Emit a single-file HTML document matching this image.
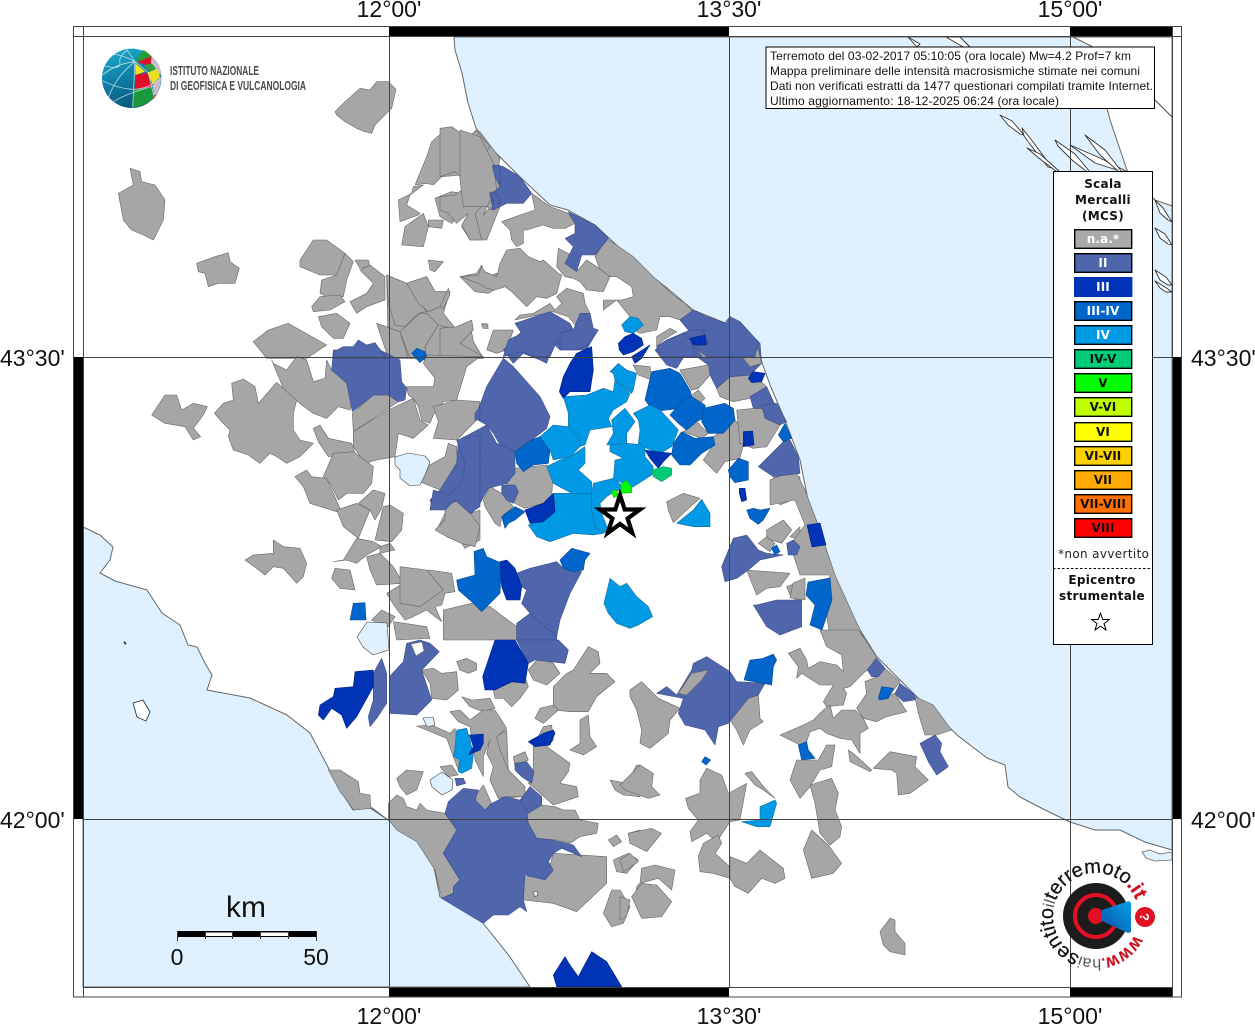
<!DOCTYPE html>
<html><head><meta charset="utf-8"><title>Mappa intensità</title>
<style>
html,body{margin:0;padding:0;background:#fff}
svg{display:block}
polygon{vector-effect:non-scaling-stroke;stroke:#666;stroke-width:.6;stroke-linejoin:round}
.g polygon{fill:#a6a6a6}
.b polygon{fill:#4f66ad;stroke:#3c4f88}
.c polygon{fill:#0033b5;stroke:#00247f}
.d polygon{fill:#0066cc;stroke:#0a4a90}
.e polygon{fill:#0099e6;stroke:#1a6f9e}
.f polygon{fill:#00cc77;stroke:#109a5f}
.v polygon{fill:#00ff00;stroke:#20b020}
.l polygon{fill:#dff0fe;stroke:#444}
.s polygon{fill:#fff;stroke:#333;stroke-width:.9}
.lab{font-family:"Liberation Sans",sans-serif;font-size:23px;fill:#111}
.dj{font-family:"DejaVu Sans",sans-serif;font-weight:bold;font-size:12px;text-anchor:middle;letter-spacing:.3px;fill:#111}
.lg{font-family:"DejaVu Sans",sans-serif;font-weight:bold;font-size:12px;text-anchor:middle;letter-spacing:.1px}
.tx{font-family:"Liberation Sans",sans-serif;font-size:12px;fill:#111}
</style></head><body>
<svg xmlns="http://www.w3.org/2000/svg" width="1255" height="1024" viewBox="0 0 1255 1024">
<defs>
<linearGradient id="gl" x1="0" y1="0" x2=".3" y2="1"><stop offset="0" stop-color="#1fb0cf"/><stop offset=".55" stop-color="#0f7ea6"/><stop offset="1" stop-color="#0a5c80"/></linearGradient>
<linearGradient id="cn" x1="0" y1="1" x2="1" y2="0"><stop offset="0" stop-color="#0d4fa8"/><stop offset="1" stop-color="#00a3e8"/></linearGradient>
</defs>
<rect width="1255" height="1024" fill="#fff"/>

<!-- sea -->
<polygon fill="#dff0fe" stroke="#444" style="stroke-width:1" points="454,37 455,50 462,73 468,103 476,128 490,147 520,177 550,205 568,210 595,225 640,267 667,288 693,310 725,323 730,317 740,323 758,342 760,357 770,385 785,420 800,460 808,500 820,530 835,580 860,630 877,657 915,695 940,718 957,735 987,758 1005,765 1008,787 1020,797 1045,810 1070,822 1095,830 1120,830 1145,842 1172,850 1172,37"/>
<polygon fill="#dff0fe" stroke="#444" style="stroke-width:1" points="83,527 100,535 113,547 110,560 100,573 115,581 147,590 162,613 180,625 188,645 197,647 206,665 212,675 207,690 223,693 250,698 287,715 310,733 328,767 340,790 353,810 370,808 388,820 417,840 433,863 440,897 467,910 483,923 510,957 530,987 83,987"/>
<!-- NE land -->
<polygon fill="#fff" stroke="#444" style="stroke-width:1" points="1073,37 1093,47 1105,100 1110,120 1127,170 1155,200 1172,206 1172,37"/>
<g class="s">
<polygon points="1022,128 1030,138 1045,158 1052,168 1048,167 1036,152 1024,136"/>
<polygon points="1027,148 1040,154 1060,172 1056,171 1040,159"/>
<polygon points="1055,140 1075,154 1090,172 1086,171 1072,160 1058,146"/>
<polygon points="1070,145 1100,158 1128,172 1120,171 1095,163"/>
<polygon points="1085,135 1105,150 1122,172 1118,171 1100,155"/>
<polygon points="1000,115 1012,121 1024,135 1020,134 1008,125"/>
<polygon points="908,37 920,44 917,47"/>
<polygon points="946,37 965,48 970,47 960,37"/>
<polygon points="1155,200 1163,208 1172,222 1168,220 1160,213"/>
<polygon points="1155,228 1165,234 1172,245 1168,244 1160,238"/>
<polygon points="1155,270 1166,277 1172,285 1168,285 1160,280"/>
<polygon points="1155,281 1165,287 1172,292 1166,292 1160,288"/>
<polygon points="133,703 143,700 150,712 146,721 137,717"/>
<polygon points="124,642 125,642 126,644 125,644"/>
</g>
<polyline points="1155,100 1172,117" fill="none" stroke="#444"/>
<polygon fill="#dff0fe" stroke="#444" style="stroke-width:.8" points="1142,852 1150,850 1160,854 1172,852 1172,860 1155,861 1146,858"/>

<!-- gray zoom8 -->
<g class="g" transform="translate(80,30) scale(.33333)">
<polygon points="920,735 980,760 1040,740 1065,785 1110,785 1090,850 1130,900 1170,880 1180,935 1210,985 925,985"/>
<polygon points="765,245 790,220 840,175 870,180 890,155 925,155 948,178 935,235 885,285 875,310 855,305 830,295 795,275 770,255"/>
<polygon points="150,415 180,425 185,455 225,465 255,510 250,570 235,600 220,630 190,615 155,600 130,570 115,490 160,465"/>
<polygon points="350,700 405,680 445,668 450,695 478,715 465,760 415,760 385,770 375,730 355,725"/>
<polygon points="660,690 700,630 740,630 795,670 770,735 720,735 660,710"/>
<polygon points="795,670 820,695 800,750 790,800 740,800 720,790 725,750 770,735"/>
<polygon points="695,830 720,800 780,795 795,815 750,840 700,845"/>
<polygon points="715,860 770,850 810,880 790,925 760,925 725,890"/>
<polygon points="825,690 865,690 870,710 840,715"/>
<polygon points="840,720 870,705 915,740 915,810 860,830 830,850 810,815 860,790 880,760"/>
<polygon points="920,735 980,760 1040,845 1015,850 975,890 945,885 925,820"/>
<polygon points="980,760 1040,740 1065,785 1110,785 1080,830 1045,845 1015,820"/>
<polygon points="890,880 960,905 985,985 925,985"/>
<polygon points="960,905 1020,850 1040,850 1075,885 1035,950 1040,990 990,985"/>
<polygon points="1035,950 1075,885 1130,900 1170,880 1180,935 1210,985 1040,990"/>
<polygon points="520,935 565,900 625,880 740,945 680,985 560,985"/>
<polygon points="1045,690 1090,695 1065,725 1050,720"/>
<polygon points="1140,740 1190,730 1205,705 1215,745 1250,730 1260,770 1225,790 1185,785"/>
<polygon points="1205,880 1225,885 1220,895"/>
<polygon points="1005,465 1040,380 1055,335 1105,292 1160,320 1140,400 1145,435 1085,440 1060,465 1040,460"/>
<polygon points="955,510 995,490 1000,470 1030,465 990,495 980,525 1020,550 1015,555 960,575"/>
<polygon points="975,590 1030,550 1045,590 1030,650 965,645"/>
<polygon points="1045,570 1090,570 1085,595 1045,590"/>
<polygon points="1065,505 1115,485 1145,490 1165,530 1115,580 1080,560"/>
<polygon points="1155,345 1200,305 1260,385 1240,490 1210,555 1240,520 1260,530 1220,630 1170,630 1145,590 1175,550 1165,525 1145,490 1140,420"/>
</g>
<!-- gray zoom12 -->
<g class="g" transform="translate(440,40) scale(.33333)">
<polygon points="0,265 35,260 85,295 108,270 150,320 130,350 128,395 155,395 190,440 187,460 150,510 135,490 105,520 125,600 90,600 65,555 85,520 50,550 25,520 0,510 0,470 45,465 85,435 45,395 0,410"/>
<polygon points="60,270 120,290 160,370 170,450 140,500 70,500 60,420"/>
<polygon points="275,460 330,500 360,510 385,520 405,550 375,565 340,565 310,555 260,570 250,570 250,610 230,620 215,600 210,570 185,545 240,525 285,510"/>
<polygon points="225,840 240,825 280,820 330,790 345,810 365,790 350,770 380,745 430,760 435,790 450,820 410,860 385,830 340,815"/>
<polygon points="60,710 115,705 125,680 135,695 170,710 180,670 200,630 240,625 265,650 300,665 310,660 355,700 365,705 350,760 320,775 290,770 260,800 215,755 195,740 165,750 140,745 115,730"/>
<polygon points="500,595 580,650 640,710 700,765 735,790 760,815 720,840 690,830 660,830 650,870 600,880 585,870 570,830 530,780 490,810 490,780 545,780 580,770 575,740 530,710 505,710 480,690 465,650"/>
<polygon points="390,670 415,690 440,660 470,680 510,710 490,755 440,750 420,725 400,715 375,710 350,680 355,625 385,640"/>
<polygon points="650,890 690,865 710,875 670,900 650,920"/>
<polygon points="760,920 815,930 800,950 770,950"/>
<polygon points="885,910 915,905 920,945 890,950"/>
<polygon points="925,945 950,900 960,950"/>
<polygon points="0,865 50,860 95,840 100,870 60,910 130,950 0,950"/>
<polygon points="0,800 25,745 30,765 10,805"/>
<polygon points="125,855 140,850 145,865 130,865"/>
</g>
<!-- gray zoom9 -->
<g class="g" transform="translate(80,350) scale(.33333)">
<polygon points="215,195 255,135 290,135 305,180 340,160 382,170 370,195 340,235 362,260 340,270 315,230 255,220"/>
<polygon points="403,190 430,160 460,150 455,100 490,87 525,110 535,160 590,97 650,150 640,190 640,240 660,270 700,280 660,320 620,340 590,320 570,310 540,340 505,315 460,300 445,260 450,240 425,215"/>
<polygon points="575,30 610,115 665,165 700,190 740,205 775,170 810,180 820,130 800,95 755,60 740,30 735,85 700,95 680,30 650,20 620,60 580,40"/>
<polygon points="980,110 1060,110 1065,85 1030,40 1040,15 1200,20 1160,50 1130,150 1090,155 1060,195 1050,220 1025,210 1015,170 1000,145 985,135"/>
<polygon points="820,245 925,180 1000,145 1020,210 1045,225 1000,265 955,250 945,320 890,330 855,340 820,290"/>
<polygon points="817,190 880,135 925,135 955,155 925,175 820,245"/>
<polygon points="1060,170 1130,150 1200,155 1190,210 1130,270 1060,265 1075,215"/>
<polygon points="700,235 720,225 745,265 815,280 825,310 745,320 715,275"/>
<polygon points="730,380 760,310 820,305 880,350 875,400 850,430 800,430 775,450 750,400"/>
<polygon points="645,380 680,360 695,380 740,385 780,475 770,485 690,460 670,410"/>
<polygon points="770,480 830,460 870,480 835,565 790,530"/>
<polygon points="835,460 880,420 915,430 905,475 885,510 870,480"/>
<polygon points="910,470 930,465 970,490 965,540 935,575 885,570"/>
<polygon points="760,635 790,630 830,565 880,575 905,590 860,615 830,640 800,630"/>
<polygon points="900,590 930,580 945,600 900,610"/>
<polygon points="860,620 900,610 940,650 970,700 890,705 870,660"/>
<polygon points="755,685 765,655 810,660 825,720 780,715"/>
<polygon points="495,630 520,615 580,610 580,570 610,590 660,595 680,640 670,680 650,700 610,655 580,650 555,675 530,655"/>
<polygon points="920,730 985,690 1000,670 1050,660 1115,670 1125,725 1095,730 1085,765 1065,770 1085,815 1040,780 1000,800 975,810 945,770"/>
<polygon points="1095,830 1100,785 1150,770 1190,795 1170,830 1120,815"/>
<polygon points="875,810 905,780 945,800 925,830 885,815"/>
<polygon points="940,815 1040,830 1050,865 950,870"/>
<polygon points="1020,395 1040,350 1095,320 1105,280 1130,290 1130,310 1160,400 1115,435 1080,420"/>
<polygon points="1070,540 1095,490 1125,450 1165,465 1170,490 1200,480 1200,570 1155,595 1135,565"/>
</g>
<!-- gray zoom5 -->
<g class="g" transform="translate(400,330) scale(.33333)">
<polygon points="840,120 925,105 930,135 895,175 875,180"/>
<polygon points="950,175 990,140 1060,135 1100,170 1050,205 1000,215 960,200"/>
<polygon points="870,200 895,180 915,205 895,225"/>
<polygon points="850,305 890,275 925,310 905,325"/>
<polygon points="935,325 1005,270 1030,300 1030,345 1020,385 975,395 950,430 910,390 940,345"/>
<polygon points="1010,240 1065,235 1085,235 1140,285 1100,350 1060,355 1020,340"/>
<polygon points="1110,460 1130,430 1170,445 1200,440 1200,500 1140,525 1125,480"/>
<polygon points="1100,600 1150,570 1175,600 1145,640 1100,625"/>
<polygon points="1075,640 1100,620 1125,640 1110,665"/>
<polygon points="1040,720 1170,730 1140,770 1100,775 1070,795"/>
<polygon points="1160,770 1200,755 1200,820 1170,795"/>
<polygon points="1200,590 1170,620 1200,630"/>
<polygon points="800,515 850,490 900,505 860,540 820,578 805,540"/>
<polygon points="320,460 345,415 440,405 460,430 455,495 430,520 375,535 345,520 310,490"/>
<polygon points="250,510 270,470 305,490 340,530 305,560 300,590 285,580 255,530"/>
<polygon points="105,600 135,570 135,530 175,510 215,555 240,590 225,650 185,640 140,620"/>
<polygon points="280,0 340,0 320,60 290,70 260,60"/>
<polygon points="700,105 750,110 755,150 715,135"/>
<polygon points="0,710 80,720 130,780 60,830 0,820"/>
<polygon points="130,840 215,820 270,830 350,890 350,930 130,930"/>
</g>
<!-- gray Adriatic band, orig coords -->
<g class="g">
<polygon points="795,470 805,490 820,530 835,575 860,630 870,650 830,640 825,600 830,575 800,575 790,545 805,525 795,500 770,505 770,480"/>
<polygon points="793,583 805,578 805,600 790,598"/>
</g>
<!-- gray zoom10 -->
<g class="g" transform="translate(200,640) scale(.33333)">
<polygon points="1060,140 1100,100 1120,90 1165,20 1195,35 1200,70 1170,100 1220,100 1245,125 1190,170 1165,215 1110,215 1060,210"/>
<polygon points="1140,240 1165,225 1170,290 1190,320 1150,345 1110,330 1140,310"/>
<polygon points="985,90 1015,55 1060,70 1080,100 1040,135 1000,120"/>
<polygon points="1060,640 1220,650 1220,730 1130,815 1060,790 970,780 970,710 1040,710"/>
<polygon points="870,300 920,270 925,390 975,440 970,470 895,475 870,420 880,380"/>
<polygon points="1005,235 1020,205 1060,195 1075,210 1030,250"/>
<polygon points="665,90 700,85 725,100 770,95 775,150 740,180 695,175 690,130"/>
<polygon points="770,65 800,55 830,70 830,90 805,100 780,90"/>
<polygon points="880,150 940,125 975,110 985,140 960,175 935,200 910,175 885,175"/>
<polygon points="785,170 815,180 870,175 885,205 850,215 810,200"/>
<polygon points="750,215 780,210 810,240 850,210 885,210 920,265 890,290 900,330 925,390 975,440 975,470 920,470 895,475 870,420 880,380 860,340 870,300 850,350 850,410 825,360 810,260 775,245"/>
<polygon points="650,258 695,255 750,280 765,265 770,305 760,350 740,295 715,285"/>
<polygon points="720,380 755,375 775,405 745,410"/>
<polygon points="760,350 780,350 775,390"/>
<polygon points="590,415 620,390 670,395 650,450 620,465 600,440"/>
<polygon points="940,350 975,335 985,360 945,380"/>
<polygon points="1000,320 1030,260 1055,255 1060,300 1040,320 1075,345 1110,370 1105,395 1080,430 1130,440 1135,470 1060,495 1010,450 985,430 995,420 1000,380"/>
<polygon points="565,490 590,465 610,475 620,500 650,510 660,490 680,510 735,520 770,570 730,640 780,720 760,740 760,760 725,775 705,690 650,605 590,570 570,545 515,505 460,510 440,480 420,455 385,390 420,390 475,425 480,460 510,465 512,500 565,540"/>
<polygon points="825,470 850,435 875,490 855,510 830,490"/>
<polygon points="980,530 995,490 1025,495 1065,500 1090,510 1125,510 1140,540 1195,550 1190,580 1140,590 1110,610 1070,600 1010,595 985,550"/>
<polygon points="1225,600 1250,585 1265,605 1240,620"/>
<polygon points="1240,660 1285,640 1315,660 1280,700 1250,695"/>
<polygon points="1285,580 1320,570 1320,620 1290,610"/>
<polygon points="1210,820 1235,750 1260,750 1290,800 1270,850 1235,860"/>
<polygon points="1230,420 1280,430 1310,375 1320,375 1320,470 1270,465 1245,450"/>
<polygon points="1290,150 1320,130 1320,220 1300,190"/>
<polygon points="1310,740 1320,730 1320,820 1305,790"/>
</g>
<!-- gray zoom11 -->
<g class="g" transform="translate(620,630) scale(.33333)">
<polygon points="30,180 65,155 115,205 180,235 150,270 145,310 90,355 60,340 65,300 50,240 30,200"/>
<polygon points="330,270 385,205 415,195 420,265 430,275 390,300 370,345 350,300"/>
<polygon points="600,0 715,0 770,80 745,120 735,125 690,170 670,175 680,190 670,225 620,230 610,215 640,165 600,165 545,130 530,145 535,110 505,70 540,55 560,90 565,115 600,95 650,105 670,125 665,75 620,50"/>
<polygon points="795,115 840,155 810,195 825,190 860,245 800,260 770,275 730,265 710,235 740,190 735,155 770,140"/>
<polygon points="885,200 940,225 995,300 950,315 915,315 895,250"/>
<polygon points="580,270 610,240 630,225 640,265 665,240 705,240 730,265 745,295 720,310 720,370 695,330 660,325 620,310 600,295 570,305 555,350 540,345 480,315 550,285"/>
<polygon points="510,450 530,390 595,390 620,345 645,345 635,410 600,420 570,470 540,505"/>
<polygon points="685,360 700,370 755,420 750,425 690,395"/>
<polygon points="760,415 810,365 890,380 885,410 925,450 870,490 835,495 830,430 815,420"/>
<polygon points="570,465 635,445 655,490 645,540 665,590 660,620 630,645 600,610 585,520"/>
<polygon points="550,660 575,600 625,645 665,700 640,730 575,745"/>
<polygon points="0,465 60,405 100,430 95,470 120,495 85,505 15,480"/>
<polygon points="240,450 260,415 305,435 325,490 380,460 360,570 330,575 290,635 260,610 215,635 210,605 235,570 205,535 197,505 240,490"/>
<polygon points="375,430 395,425 435,475 465,505 430,480 405,465"/>
<polygon points="235,680 250,640 295,615 305,640 285,670 330,710 330,745 280,730 240,725"/>
<polygon points="330,680 380,700 420,660 490,715 495,745 465,760 425,745 385,790 345,770 330,745"/>
<polygon points="25,610 95,595 125,610 80,665 30,640"/>
<polygon points="60,760 65,715 105,705 165,720 155,780 115,745"/>
<polygon points="35,800 65,760 110,765 155,815 125,860 65,865"/>
<polygon points="0,690 30,670 55,695 10,725"/>
<polygon points="0,800 30,810 20,860 0,870"/>
<polygon points="780,905 810,865 825,870 825,905 855,940 855,975 810,965 790,945"/>
</g>

<!-- lakes -->
<g class="l">
<polygon points="395,457 408,453 425,456 430,462 425,475 420,485 410,486 400,478 400,470 395,465"/>
<polygon points="357,637 367,622 387,623 389,650 373,655 363,647"/>
<polygon points="430,780 442,772 453,780 452,790 442,795 432,787"/>
<polygon points="423,718 433,717 435,725 427,727"/>
<polygon points="533,892 537,891 538,895 535,897"/>
</g>

<!-- II -->
<g class="b" transform="translate(400,330) scale(.33333)">
<polygon points="310,85 340,110 420,200 450,260 440,295 395,330 345,365 300,345 280,310 260,285 225,265 260,170"/>
<polygon points="90,510 120,480 170,400 175,330 260,285 290,340 345,365 345,430 320,460 265,475 240,520 215,550 180,515 130,510 100,540"/>
<polygon points="310,60 370,0 590,0 560,60 480,60 460,40 440,100 420,90 370,70 340,100"/>
<polygon points="350,730 390,715 470,695 490,715 545,725 510,790 480,870 470,920 390,850 365,820 380,780 365,770"/>
<polygon points="350,880 390,850 470,920 470,930 350,930"/>
<polygon points="305,465 345,465 355,485 340,520 320,510 305,490"/>
<polygon points="965,710 1000,625 1040,615 1075,660 1100,670 1150,675 1080,690 1045,720 1010,745 975,755"/>
<polygon points="1070,825 1130,810 1205,810 1205,890 1140,915 1100,890 1060,825"/>
<polygon points="1160,640 1180,630 1200,650 1190,675 1165,675"/>
<polygon points="1075,410 1150,335 1170,330 1195,380 1200,430 1120,440"/>
<polygon points="1050,200 1100,170 1125,225 1085,235 1060,235"/>
<polygon points="1085,225 1130,220 1160,275 1140,285 1095,265"/>
<polygon points="765,60 800,30 870,0 920,0 1040,0 1080,40 1085,100 1050,135 990,140 950,175 930,135 925,105 890,80 855,75 830,115 800,105"/>
</g>
<g class="g" transform="translate(400,330) scale(.33333)">
<polygon points="885,50 935,70 910,85"/>
<polygon points="1000,40 1035,35 1075,60 1085,100 1050,110 1030,85"/>
<polygon points="840,120 925,105 930,135 895,175 875,180"/>
</g>
<g class="b" transform="translate(440,40) scale(.33333)">
<polygon points="160,375 190,380 240,410 275,460 250,490 200,490 160,510 150,465 180,440"/>
<polygon points="385,515 465,555 505,595 465,645 425,645 410,695 375,670 400,620 375,595 405,580 405,550"/>
<polygon points="225,850 330,815 390,850 400,870 360,880 365,920 350,905 330,950 290,950 240,935 190,950 205,900 245,880"/>
<polygon points="400,870 420,820 450,820 460,865 475,870 450,910 410,930 360,930 360,880"/>
<polygon points="720,840 760,810 800,830 860,850 870,830 900,845 955,905 945,950 800,950 760,920 805,910 790,870 745,870"/>
<polygon points="650,920 680,900 730,880 755,905 765,950 660,950"/>
</g>
<g class="b" transform="translate(80,350) scale(.33333)">
<polygon points="755,60 760,0 900,0 960,30 965,95 980,115 975,150 955,155 925,135 880,135 817,185 800,100"/>
<polygon points="1130,270 1200,255 1200,470 1170,490 1125,450 1095,480 1050,480 1060,420 1110,435 1145,400 1155,340"/>
<polygon points="1185,190 1200,170 1200,210 1185,210"/>
</g>
<g class="b" transform="translate(80,30) scale(.33333)">
<polygon points="758,985 762,965 790,950 820,950 835,930 860,945 885,938 920,985"/>
<polygon points="1237,408 1260,405 1260,470 1245,440"/>
<polygon points="1228,490 1240,485 1260,505 1260,530 1235,540 1240,510"/>
</g>
<g class="b" transform="translate(200,640) scale(.33333)">
<polygon points="505,230 520,180 520,100 545,55 560,100 560,190 530,235 510,260"/>
<polygon points="568,110 610,65 620,10 660,0 690,10 718,35 665,90 695,180 650,225 570,220"/>
<polygon points="950,0 1075,0 1105,30 1095,70 1050,65 1005,60 985,70"/>
<polygon points="745,485 790,445 835,450 825,480 855,510 875,490 915,470 960,480 980,510 985,550 1010,595 1060,600 1120,615 1145,650 1085,625 1060,640 1045,665 1060,690 1035,720 975,705 970,780 980,815 960,800 925,825 880,825 850,850 725,775 760,760 760,740 780,720 730,640 770,570 735,520"/>
<polygon points="960,480 990,440 1025,470 1025,495 985,520"/>
<polygon points="945,370 980,365 1002,395 995,430 965,410 945,390"/>
<polygon points="765,415 790,415 797,430 770,438"/>
</g>
<polygon fill="#fff" stroke="#3c4f88" points="411,644 422,642 424,651 416,656"/>
<g class="b" transform="translate(620,630) scale(.33333)">
<polygon points="110,190 140,170 170,195 215,120 220,100 260,80 330,125 350,155 435,160 415,195 385,205 325,280 295,290 285,345 255,300 195,285 175,250 190,205"/>
<polygon points="742,120 770,85 795,115 775,140 755,140"/>
<polygon points="840,160 885,195 885,210 850,215 825,190"/>
<polygon points="900,340 945,315 965,340 960,365 985,410 950,435 925,395"/>
</g>
<g class="g" transform="translate(620,630) scale(.33333)">
<polygon points="175,190 215,130 265,120 245,150 200,195"/>
</g>

<!-- III-IV -->
<g class="d" transform="translate(400,330) scale(.33333)">
<polygon points="345,365 395,330 420,320 450,360 445,400 400,405 370,425 350,400"/>
<polygon points="735,210 755,125 810,115 840,130 870,180 875,200 850,235 800,240 760,245"/>
<polygon points="810,255 850,210 875,200 915,225 920,260 890,275 860,300 835,280"/>
<polygon points="910,235 975,220 1000,235 1005,270 970,310 925,310 905,275"/>
<polygon points="820,340 845,305 885,325 940,320 945,345 905,370 870,405 840,405 815,375"/>
<polygon points="985,420 1015,385 1045,395 1045,450 1005,458 990,440"/>
<polygon points="1135,315 1155,280 1175,325 1150,335"/>
<polygon points="1040,540 1060,535 1080,540 1110,535 1090,570 1075,583 1050,565"/>
<polygon points="1115,655 1130,645 1140,665 1125,675"/>
<polygon points="305,560 345,530 375,545 345,570 325,580 315,595"/>
<polygon points="170,750 225,735 222,665 250,655 260,680 305,700 300,790 245,845 215,815 175,780"/>
<polygon points="480,690 515,655 570,670 555,690 550,720 520,725 490,715"/>
</g>
<g class="d">
<polygon points="808,582 830,578 832,600 822,630 810,625 815,605 806,595"/>
</g>
<g class="d" transform="translate(80,350) scale(.33333)">
<polygon points="810,810 820,760 855,758 858,810"/>
<polygon points="995,10 1010,-5 1035,5 1040,20 1020,38"/>
</g>
<g class="d" transform="translate(620,630) scale(.33333)">
<polygon points="372,150 390,90 430,85 460,72 470,90 460,110 455,165 430,160"/>
<polygon points="775,205 785,170 820,175 805,205 780,210"/>
<polygon points="535,345 560,335 565,360 585,385 545,390"/>
<polygon points="245,395 255,380 272,390 258,405"/>
</g>

<!-- IV -->
<g class="e" transform="translate(400,330) scale(.33333)">
<polygon points="490,200 560,195 610,175 640,185 645,150 690,190 680,215 640,240 625,265 635,290 570,300 555,345 535,350 505,290 505,250"/>
<polygon points="630,125 655,100 680,120 710,130 700,180 695,190 645,150 640,130"/>
<polygon points="420,320 460,285 505,290 535,320 540,350 510,380 460,390 450,360"/>
<polygon points="440,410 480,390 510,380 555,350 555,400 535,420 575,455 575,490 515,490 460,460"/>
<polygon points="630,345 680,340 735,345 735,380 760,410 755,435 700,470 690,475 660,455 640,450 645,390 670,385 630,365"/>
<polygon points="620,345 640,310 635,270 675,235 705,275 680,310 680,340"/>
<polygon points="700,250 750,225 780,240 835,300 815,350 780,370 740,355 715,340 720,300 715,270"/>
<polygon points="580,460 640,445 665,465 660,480 635,490 620,500 600,520 605,550 625,600 610,610 585,590 575,545 575,490"/>
<polygon points="385,585 420,570 450,560 465,520 460,490 515,490 575,490 575,545 585,590 610,610 580,615 520,610 450,635 410,620"/>
<polygon points="830,580 880,540 905,508 930,550 930,590 880,590"/>
<polygon points="612,820 630,745 660,770 680,760 710,800 745,830 758,860 715,885 690,895 650,880 625,850"/>
</g>
<g class="e" transform="translate(440,40) scale(.33333)">
<polygon points="545,855 570,830 595,835 610,855 580,880 555,875"/>
</g>
<g class="e" transform="translate(200,640) scale(.33333)">
<polygon points="770,270 800,265 810,300 820,345 815,385 785,400 775,395 780,360 762,350"/>
</g>
<g class="e" transform="translate(620,630) scale(.33333)">
<polygon points="365,575 420,570 420,530 465,510 470,520 450,590 410,590"/>
</g>

<!-- III -->
<g class="c" transform="translate(400,330) scale(.33333)">
<polygon points="490,140 510,100 530,70 575,50 580,120 570,185 510,185 490,205 478,185"/>
<polygon points="375,540 430,520 460,490 465,545 430,575 390,580"/>
<polygon points="735,360 770,365 815,370 790,395 775,415 750,385"/>
<polygon points="300,695 320,690 345,715 365,770 360,810 320,810 305,770"/>
<polygon points="1030,305 1058,303 1062,345 1030,350"/>
<polygon points="1045,145 1060,125 1095,130 1085,155 1055,158"/>
<polygon points="1018,475 1035,475 1040,510 1025,515 1018,490"/>
<polygon points="655,40 675,20 700,10 725,25 730,45 700,65 670,75 658,60"/>
<polygon points="695,80 750,45 725,85 705,100"/>
<polygon points="870,25 915,15 920,45 880,45"/>
</g>
<g class="c">
<polygon points="807,525 820,523 826,545 812,547"/>
</g>
<g class="c" transform="translate(200,640) scale(.33333)">
<polygon points="355,225 360,195 400,170 405,145 460,140 465,95 520,90 520,140 470,230 440,265 425,225 395,205 370,240"/>
<polygon points="848,110 885,0 945,0 985,70 975,130 935,125 885,150 855,150"/>
<polygon points="808,285 850,282 850,310 840,330 805,345 820,320"/>
<polygon points="985,305 1030,280 1060,270 1065,280 1050,315 1005,320"/>
<polygon points="1060,1005 1095,950 1110,975 1135,1010 1175,935 1220,965 1265,1040 1070,1040"/>
</g>

<!-- IV-V, V -->
<g class="f" transform="translate(400,330) scale(.33333)"><polygon points="755,420 790,410 815,415 815,435 785,455 760,440"/></g>
<g class="v" transform="translate(400,330) scale(.33333)">
<polygon points="635,482 650,480 655,500 640,502"/>
<polygon points="662,465 678,450 695,470 695,488 665,490"/>
</g>

<!-- Star -->
<polygon fill="#fff" style="stroke:#000;stroke-width:4.2;stroke-linejoin:miter;stroke-miterlimit:10" points="620,495 624.7,509.5 640,509.5 627.6,518.5 632.3,533 620,524 607.7,533 612.4,518.5 600,509.5 615.3,509.5"/>

<!-- grid -->
<g stroke="#444" stroke-width="1" shape-rendering="crispEdges">
<line x1="389.5" y1="37" x2="389.5" y2="987"/>
<line x1="729.5" y1="37" x2="729.5" y2="987"/>
<line x1="1070.5" y1="37" x2="1070.5" y2="987"/>
<line x1="83" y1="357.5" x2="1172" y2="357.5"/>
<line x1="83" y1="819.5" x2="1172" y2="819.5"/>
</g>
<!-- frame -->
<g fill="#000" shape-rendering="crispEdges">
<rect x="389" y="27" width="340" height="9"/><rect x="1070" y="27" width="102" height="9"/>
<rect x="389" y="988" width="340" height="9"/><rect x="1070" y="988" width="102" height="9"/>
<rect x="74" y="357" width="9" height="462"/><rect x="1173" y="357" width="9" height="462"/>
</g>
<g fill="none" stroke="#444" shape-rendering="crispEdges">
<rect x="73.5" y="26.5" width="1108" height="970.5"/>
<rect x="83.5" y="36.5" width="1089" height="951"/>
<line x1="83.5" y1="26" x2="83.5" y2="37"/><line x1="1172.5" y1="26" x2="1172.5" y2="37"/>
<line x1="73" y1="36.5" x2="84" y2="36.5"/><line x1="1172" y1="36.5" x2="1182" y2="36.5"/>
<line x1="83.5" y1="987" x2="83.5" y2="997"/><line x1="1172.5" y1="987" x2="1172.5" y2="997"/>
</g>

<!-- labels -->
<g class="lab">
<text x="389" y="17" text-anchor="middle">12°00'</text>
<text x="729" y="17" text-anchor="middle">13°30'</text>
<text x="1070" y="17" text-anchor="middle">15°00'</text>
<text x="389" y="1024" text-anchor="middle">12°00'</text>
<text x="729" y="1024" text-anchor="middle">13°30'</text>
<text x="1070" y="1024" text-anchor="middle">15°00'</text>
<text x="0" y="366">43°30'</text>
<text x="0" y="828">42°00'</text>
<text x="1191" y="366">43°30'</text>
<text x="1191" y="828">42°00'</text>
</g>

<!-- info box -->
<rect x="766" y="47" width="388.5" height="61.5" fill="#fff" stroke="#000" stroke-width="1" shape-rendering="crispEdges"/>
<g class="tx">
<text x="770" y="60" textLength="361">Terremoto del 03-02-2017 05:10:05 (ora locale) Mw=4.2 Prof=7 km</text>
<text x="770" y="75" textLength="370">Mappa preliminare delle intensità macrosismiche stimate nei comuni</text>
<text x="770" y="90" textLength="383">Dati non verificati estratti da 1477 questionari compilati tramite Internet.</text>
<text x="770" y="105" textLength="289">Ultimo aggiornamento: 18-12-2025 06:24 (ora locale)</text>
</g>

<!-- legend -->
<rect x="1053.5" y="171.5" width="99" height="473" fill="#fff" stroke="#000" stroke-width="1" shape-rendering="crispEdges"/>
<g class="dj">
<text x="1103" y="188">Scala</text>
<text x="1103" y="204">Mercalli</text>
<text x="1103" y="220">(MCS)</text>
</g>
<g stroke="#000" stroke-width="1.4">
<rect x="1074.7" y="229.7" width="57" height="18.6" fill="#a9a9a9"/>
<rect x="1074.7" y="253.7" width="57" height="18.6" fill="#5066ac"/>
<rect x="1074.7" y="277.7" width="57" height="18.6" fill="#0033b8" stroke="#0033b8"/>
<rect x="1074.7" y="301.7" width="57" height="18.6" fill="#0066cc"/>
<rect x="1074.7" y="325.7" width="57" height="18.6" fill="#0099e6"/>
<rect x="1074.7" y="349.7" width="57" height="18.6" fill="#00cc77"/>
<rect x="1074.7" y="373.7" width="57" height="18.6" fill="#00ff00"/>
<rect x="1074.7" y="397.7" width="57" height="18.6" fill="#bfff00"/>
<rect x="1074.7" y="422.7" width="57" height="18.6" fill="#ffff00"/>
<rect x="1074.7" y="446.7" width="57" height="18.6" fill="#ffd000"/>
<rect x="1074.7" y="470.7" width="57" height="18.6" fill="#ffaa00"/>
<rect x="1074.7" y="494.7" width="57" height="18.6" fill="#ff7000"/>
<rect x="1074.7" y="518.7" width="57" height="18.6" fill="#ff0000"/>
</g>
<g class="lg" fill="#fff">
<text x="1103" y="243">n.a.*</text>
<text x="1103" y="267">II</text>
<text x="1103" y="291">III</text>
<text x="1103" y="315">III-IV</text>
<text x="1103" y="339">IV</text>
</g>
<g class="lg" fill="#111">
<text x="1103" y="363">IV-V</text>
<text x="1103" y="387">V</text>
<text x="1103" y="411">V-VI</text>
<text x="1103" y="436">VI</text>
<text x="1103" y="460">VI-VII</text>
<text x="1103" y="484">VII</text>
<text x="1103" y="508">VII-VIII</text>
<text x="1103" y="532">VIII</text>
</g>
<text x="1058" y="558" textLength="91" font-family="'DejaVu Sans',sans-serif" font-size="12" fill="#222">*non avvertito</text>
<line x1="1053" y1="568.5" x2="1152" y2="568.5" stroke="#000" stroke-width="1" stroke-dasharray="2.5 2"/>
<g class="dj">
<text x="1102" y="584">Epicentro</text>
<text x="1102" y="600">strumentale</text>
</g>
<polygon fill="#fff" style="stroke:#000;stroke-width:1" points="1100.5,613 1102.7,619.5 1109.5,619.5 1104,623.6 1106.1,630.2 1100.5,626.1 1094.9,630.2 1097,623.6 1091.5,619.5 1098.3,619.5"/>

<!-- scale -->
<text x="246" y="917" text-anchor="middle" font-family="'Liberation Sans',sans-serif" font-size="30" fill="#111">km</text>
<g shape-rendering="crispEdges">
<rect x="177" y="931" width="140" height="6" fill="#000"/>
<rect x="205" y="932.5" width="27" height="3.5" fill="#fff"/>
<rect x="261" y="932.5" width="27" height="3.5" fill="#fff"/>
<rect x="177" y="931" width="1" height="10" fill="#333"/><rect x="316" y="931" width="1" height="10" fill="#333"/>
<rect x="205" y="931" width="1" height="8" fill="#333"/><rect x="232" y="931" width="1" height="8" fill="#333"/>
<rect x="260" y="931" width="1" height="8" fill="#333"/><rect x="288" y="931" width="1" height="8" fill="#333"/>
</g>
<g class="lab" text-anchor="middle">
<text x="177" y="965" text-anchor="middle">0</text>
<text x="316" y="965" text-anchor="middle">50</text>
</g>

<!-- INGV logo -->
<g transform="translate(80,30) scale(.33333)">
<circle cx="155" cy="145" r="89" fill="url(#gl)"/>
<path d="M168 92 L190 60 Q205 68 215 80 L170 95Z" fill="#25a030"/>
<path d="M172 96 L212 80 L215 105 L195 105Z" fill="#e0102a"/>
<path d="M215 78 Q240 100 244 130 L240 135 L213 100Z" fill="#c9bccb"/>
<path d="M166 100 L195 125 L166 135Z" fill="#f2e418"/>
<path d="M195 105 L215 100 L228 115 L203 125Z" fill="#2da03a"/>
<path d="M203 128 L232 115 L240 142 L217 162Z" fill="#ece01a"/>
<path d="M166 135 L202 128 L215 170 L164 178Z" fill="#e0102a"/>
<path d="M160 180 L217 172 L222 205 Q195 228 158 232Z" fill="#1a9a3c"/>
<path d="M218 165 L243 140 Q244 170 228 195 L222 195Z" fill="#c9bccb"/>
<path d="M222 198 L232 190 L222 205Z" fill="#e0102a"/>
<g fill="none" stroke="#fff" stroke-width="2.4" opacity=".7">
<path d="M165 95 L158 232"/>
<path d="M165 95 Q105 140 82 212"/>
<path d="M165 95 Q110 100 68 135"/>
<path d="M165 95 Q130 75 95 72"/>
<path d="M165 95 L140 58"/>
<path d="M75 108 Q120 120 120 100 Q115 80 140 62"/>
<path d="M68 152 Q110 175 160 178 Q200 178 235 150"/>
<path d="M100 215 Q140 190 222 168"/>
<path d="M165 95 L205 128 L222 200"/>
</g>
</g>
<text x="170" y="75" textLength="89" lengthAdjust="spacingAndGlyphs" font-family="'Liberation Sans Narrow','Liberation Sans',sans-serif" font-size="12.5" font-weight="bold" fill="#4a4a4a">ISTITUTO NAZIONALE</text>
<text x="170" y="90" textLength="136" lengthAdjust="spacingAndGlyphs" font-family="'Liberation Sans Narrow','Liberation Sans',sans-serif" font-size="12.5" font-weight="bold" fill="#4a4a4a">DI GEOFISICA E VULCANOLOGIA</text>

<!-- haisentito logo -->
<circle cx="1096" cy="916" r="33" fill="#1c1c1c"/>
<circle cx="1096" cy="916" r="21" fill="none" stroke="#e30f22" stroke-width="4"/>
<circle cx="1096" cy="916" r="8" fill="#e30f22"/>
<path d="M1102 910 L1129 901 L1131 903 L1131 932 L1128 933 L1102 921Z" fill="url(#cn)"/>
<circle cx="1145" cy="917" r="10" fill="#e30f22"/>
<text x="1145" y="922" text-anchor="middle" font-family="'Liberation Sans',sans-serif" font-size="13" font-weight="bold" fill="#fff" transform="rotate(90 1145 917)">?</text>
<path id="rp" d="M1134.6 934.9 A43 43 0 1 1 1137.5 904.9" fill="none"/>
<text font-family="'Liberation Sans',sans-serif" font-size="20" fill="#111" stroke="#111" stroke-width=".25"><textPath href="#rp"><tspan fill="#d01020" stroke="#d01020" font-weight="bold" font-size="14">WWW.</tspan><tspan fill="#555" stroke="none" font-size="16">hai</tspan><tspan>sentito</tspan><tspan fill="#555" stroke="none" font-size="16">il</tspan><tspan>terremoto</tspan><tspan fill="#d01020" stroke="#d01020" font-weight="bold">.it</tspan></textPath></text>
</svg>
</body></html>
